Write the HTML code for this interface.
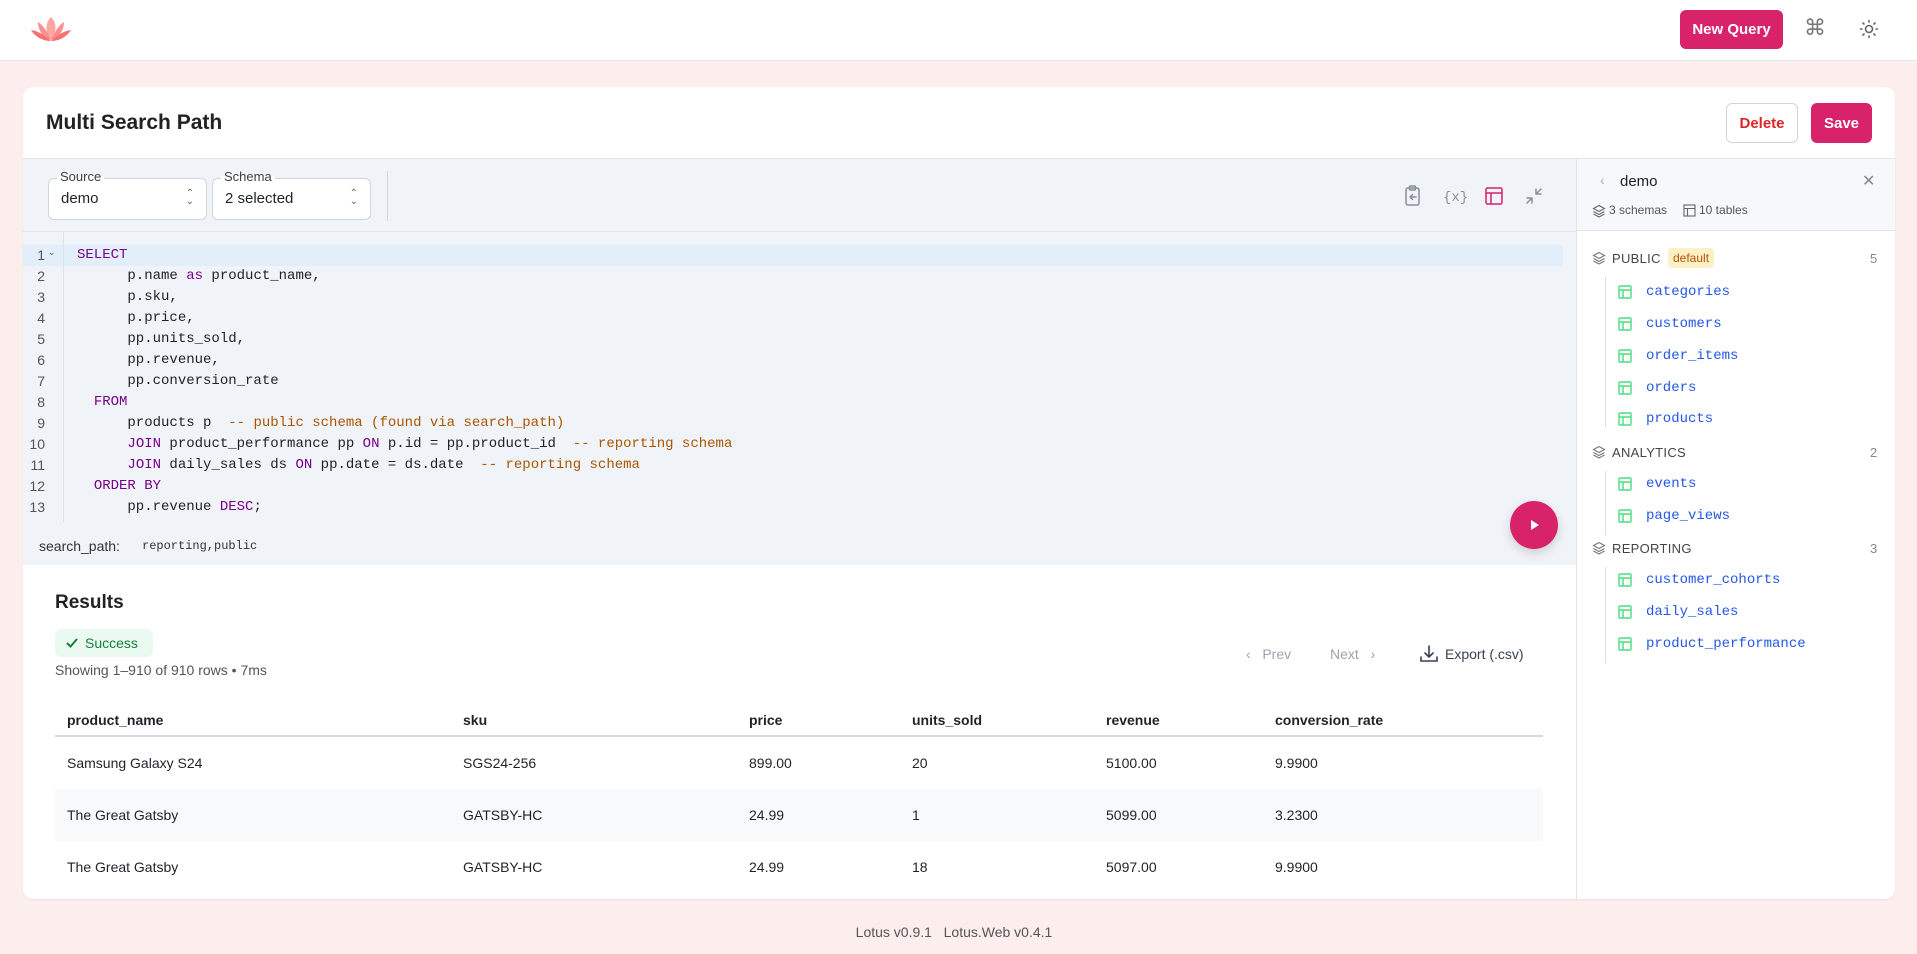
<!DOCTYPE html>
<html><head><meta charset="utf-8"><style>
*{box-sizing:border-box;margin:0;padding:0}
body{width:1917px;height:954px;background:#fdeeee;font-family:"Liberation Sans",sans-serif;color:#1f2328;position:relative;overflow:hidden}
.a{position:absolute}
.mono{font-family:"Liberation Mono",monospace}
.hdr{left:0;top:0;width:1917px;height:61px;background:#fff;border-bottom:1px solid #e3e5ea}
.btn{border-radius:6px;font-weight:bold;font-size:15px;display:flex;align-items:center;justify-content:center}
.card{left:23px;top:87px;width:1872px;height:812px;background:#fff;border-radius:10px;overflow:hidden;box-shadow:0 1px 2px rgba(0,0,0,.05)}
.sel{border:1px solid #d0d4db;border-radius:6px;background:#fff;height:42px}
.sel .lab{position:absolute;top:-10px;left:8px;background:linear-gradient(#f0f3f8 50%,#fff 50%);padding:0 3px;font-size:13px;color:#3a3f47}
.sel .v{position:absolute;left:12px;top:11px;font-size:15px}
.sel .ud{position:absolute;right:12px;top:11px;font-size:10px;color:#666;line-height:8px;text-align:center}
.code{font-size:14px;line-height:21px;white-space:pre;color:#222}
.k{color:#770088}.c{color:#aa5500}
.ln{font-size:14px;line-height:21px;color:#555;text-align:right;width:22px}
.tbl{font-size:14px}
.tn{font-size:14px;color:#2457e6;font-family:"Liberation Mono",monospace;position:absolute;left:29px;white-space:nowrap;line-height:18px}
.sch{font-size:13px;color:#444;letter-spacing:.3px}
.cnt{font-size:13px;color:#888}
</style></head><body>
<div class="a hdr"></div>
<svg class="a" style="left:30px;top:16px" width="42" height="28" viewBox="0 0 42 28">
<path d="M21 1 C15 7 15 16 21 24 C27 16 27 7 21 1Z" fill="#fca5a5"/>
<path d="M8 6 C8 14 13 22 21 24 C18 17 14 10 8 6Z" fill="#fb8f8f"/>
<path d="M34 6 C34 14 29 22 21 24 C24 17 28 10 34 6Z" fill="#fb8f8f"/>
<path d="M1 14 C5 21 13 25 21 25 C15 19 8 15 1 14Z" fill="#f87171"/>
<path d="M41 14 C37 21 29 25 21 25 C27 19 34 15 41 14Z" fill="#f87171"/>
</svg>
<div class="a btn" style="left:1680px;top:10px;width:103px;height:39px;background:#d8236b;color:#fff">New Query</div>
<div class="a" style="left:1804px;top:15px;font-size:22px;color:#777">⌘</div>
<svg class="a" style="left:1859px;top:19px" width="20" height="20" viewBox="0 0 20 20" fill="none" stroke="#666" stroke-width="1.6"><circle cx="10" cy="10" r="3.5"/><path d="M10 1.5v1.5M10 17v1.5M1.5 10H3M17 10h1.5M4 4l1 1M15 15l1 1M4 16l1-1M15 5l1-1" stroke-linecap="round"/></svg>

<div class="a card">
 <div class="a" style="left:23px;top:24px;font-size:21px;font-weight:bold;color:#222">Multi Search Path</div>
 <div class="a btn" style="left:1703px;top:16px;width:72px;height:40px;border:1px solid #d0d4db;color:#dc2626;background:#fff">Delete</div>
 <div class="a btn" style="left:1788px;top:16px;width:61px;height:40px;background:#d8236b;color:#fff">Save</div>
 <div class="a" style="left:0;top:71px;width:1872px;height:1px;background:#e3e5ea"></div>
 <div class="a" style="left:0;top:72px;width:1553px;height:406px;background:#f0f3f8"></div>
 <div class="a" style="left:0;top:144px;width:1553px;height:1px;background:#e1e4ea"></div>
 <div class="a sel" style="left:25px;top:91px;width:159px"><span class="lab">Source</span><span class="v">demo</span><span class="ud">⌃<br>⌄</span></div>
 <div class="a sel" style="left:189px;top:91px;width:159px"><span class="lab">Schema</span><span class="v">2 selected</span><span class="ud">⌃<br>⌄</span></div>
 <div class="a" style="left:364px;top:84px;width:1px;height:50px;background:#d0d4db"></div>
 <svg class="a" style="left:1380px;top:98px" width="140" height="22" viewBox="0 0 140 22" fill="none" stroke-width="1.5" stroke-linecap="round" stroke-linejoin="round">
  <g stroke="#8a8f98"><rect x="3" y="3" width="13" height="17" rx="2"/><rect x="6.5" y="1" width="6" height="4" rx="1"/><path d="M13 12H7M9.5 9.5L7 12l2.5 2.5"/></g>
  <text x="40" y="16" font-family="Liberation Mono" font-size="14" fill="#8a8f98" stroke="none">{x}</text>
  <g stroke="#d8236b"><rect x="83" y="3" width="16" height="16" rx="1.5"/><path d="M83 8h16M88 8v11"/></g>
  <g stroke="#8a8f98"><path d="M124 18l5-5M124 13h5v5M138 4l-5 5M133 4v5h5"/></g>
 </svg>
 <div class="a" style="left:0;top:158px;width:1540px;height:21px;background:#e2eef9"></div>
 <div class="a" style="left:40px;top:145px;width:1px;height:290px;background:#dde1e7"></div>
 <div class="a ln" style="left:0;top:158px">1<br>2<br>3<br>4<br>5<br>6<br>7<br>8<br>9<br>10<br>11<br>12<br>13</div>
 <div class="a" style="left:25px;top:160px;font-size:9px;color:#666">⌄</div>
 <div class="a code mono" style="left:54px;top:158px"><span class="k">SELECT</span>
      p.name <span class="k">as</span> product_name,
      p.sku,
      p.price,
      pp.units_sold,
      pp.revenue,
      pp.conversion_rate
  <span class="k">FROM</span>
      products p  <span class="c">-- public schema (found via search_path)</span>
      <span class="k">JOIN</span> product_performance pp <span class="k">ON</span> p.id = pp.product_id  <span class="c">-- reporting schema</span>
      <span class="k">JOIN</span> daily_sales ds <span class="k">ON</span> pp.date = ds.date  <span class="c">-- reporting schema</span>
  <span class="k">ORDER BY</span>
      pp.revenue <span class="k">DESC</span>;</div>
 <div class="a" style="left:16px;top:451px;font-size:14px;color:#333">search_path:</div>
 <div class="a mono" style="left:119px;top:452px;font-size:12px;color:#333">reporting,public</div>
 <div class="a" style="left:1487px;top:414px;width:48px;height:48px;border-radius:50%;background:#d8236b;box-shadow:0 4px 10px rgba(0,0,0,.15)"><svg width="48" height="48"><path d="M21 19l8 5-8 5z" fill="#fff"/></svg></div>
 <div class="a" style="left:32px;top:505px;font-size:19px;font-weight:bold;color:#222">Results</div>
 <div class="a" style="left:32px;top:542px;width:98px;height:28px;background:#eafaf0;border-radius:6px;color:#15803d;font-size:14px;padding:6px 0 0 30px">Success</div>
 <svg class="a" style="left:42px;top:549px" width="14" height="14"><path d="M2 7l3.5 3.5L12 3" fill="none" stroke="#15803d" stroke-width="2"/></svg>
 <div class="a" style="left:32px;top:575px;font-size:14px;color:#555">Showing 1–910 of 910 rows • 7ms</div>
 <div class="a" style="left:1223px;top:559px;font-size:14px;color:#9ca3af">‹&nbsp;&nbsp;&nbsp;Prev</div>
 <div class="a" style="left:1307px;top:559px;font-size:14px;color:#9ca3af">Next&nbsp;&nbsp;&nbsp;›</div>
 <svg class="a" style="left:1396px;top:557px" width="20" height="20" fill="none" stroke="#374151" stroke-width="1.6" stroke-linecap="round"><path d="M10 2v11M6 9l4 4 4-4M2 13v4h16v-4"/></svg>
 <div class="a" style="left:1422px;top:559px;font-size:14px;color:#374151">Export (.csv)</div>
 <div class="a tbl" style="left:32px;top:616px;width:1488px">
  <div style="height:34px;border-bottom:2px solid #d4d7dc;position:relative;font-weight:bold;font-size:14px">
   <span class="a" style="left:12px;top:9px">product_name</span><span class="a" style="left:408px;top:9px">sku</span><span class="a" style="left:694px;top:9px">price</span><span class="a" style="left:857px;top:9px">units_sold</span><span class="a" style="left:1051px;top:9px">revenue</span><span class="a" style="left:1220px;top:9px">conversion_rate</span>
  </div>
  <div style="height:52px;position:relative"><span class="a" style="left:12px;top:18px">Samsung Galaxy S24</span><span class="a" style="left:408px;top:18px">SGS24-256</span><span class="a" style="left:694px;top:18px">899.00</span><span class="a" style="left:857px;top:18px">20</span><span class="a" style="left:1051px;top:18px">5100.00</span><span class="a" style="left:1220px;top:18px">9.9900</span></div>
  <div style="height:52px;position:relative;background:#f8f9fa"><span class="a" style="left:12px;top:18px">The Great Gatsby</span><span class="a" style="left:408px;top:18px">GATSBY-HC</span><span class="a" style="left:694px;top:18px">24.99</span><span class="a" style="left:857px;top:18px">1</span><span class="a" style="left:1051px;top:18px">5099.00</span><span class="a" style="left:1220px;top:18px">3.2300</span></div>
  <div style="height:52px;position:relative"><span class="a" style="left:12px;top:18px">The Great Gatsby</span><span class="a" style="left:408px;top:18px">GATSBY-HC</span><span class="a" style="left:694px;top:18px">24.99</span><span class="a" style="left:857px;top:18px">18</span><span class="a" style="left:1051px;top:18px">5097.00</span><span class="a" style="left:1220px;top:18px">9.9900</span></div>
 </div>
 <!-- sidebar -->
 <div class="a" style="left:1553px;top:72px;width:1px;height:740px;background:#e3e5ea"></div>
 <div class="a" style="left:1554px;top:72px;width:318px;height:72px;background:#f7f8fa"></div>
 <div class="a" style="left:1577px;top:85px;font-size:14px;color:#aaa">‹</div>
 <div class="a" style="left:1597px;top:86px;font-size:15px;color:#222">demo</div>
 <div class="a" style="left:1839px;top:84px;font-size:16px;color:#888">✕</div>
 <svg class="a" style="left:1569px;top:117px" width="14" height="14" fill="none" stroke="#666" stroke-width="1.1"><path d="M7 1.5L1.5 4.5 7 7.5l5.5-3zM1.5 7.5L7 10.5l5.5-3M1.5 10L7 13l5.5-3"/></svg>
 <div class="a" style="left:1586px;top:116px;font-size:12px;color:#555">3 schemas</div>
 <svg class="a" style="left:1660px;top:117px" width="13" height="13" fill="none" stroke="#666" stroke-width="1.1"><rect x="1" y="1" width="11" height="11"/><path d="M1 4.5h11M4.5 4.5v7.5"/></svg>
 <div class="a" style="left:1676px;top:116px;font-size:12px;color:#555">10 tables</div>
 <div class="a" style="left:1554px;top:143px;width:318px;height:1px;background:#e3e5ea"></div>

 <svg class="a" style="left:1569px;top:164px" width="14" height="14" fill="none" stroke="#777" stroke-width="1.1"><path d="M7 1.5L1.5 4.5 7 7.5l5.5-3zM1.5 7.5L7 10.5l5.5-3M1.5 10L7 13l5.5-3"/></svg>
 <div class="a sch" style="left:1589px;top:164px">PUBLIC</div>
 <div class="a" style="left:1645px;top:161px;background:#fdf0c4;color:#b45309;font-size:12px;border-radius:4px;padding:3px 5px">default</div>
 <div class="a cnt" style="left:1847px;top:164px">5</div>
 <div class="a" style="left:1582px;top:190px;width:1px;height:150px;background:#ddd"></div>
 <div class="a sch" style="left:1589px;top:358px">ANALYTICS</div><div class="a cnt" style="left:1847px;top:358px">2</div>
 <div class="a" style="left:1582px;top:384px;width:1px;height:64px;background:#ddd"></div>
 <div class="a sch" style="left:1589px;top:454px">REPORTING</div><div class="a cnt" style="left:1847px;top:454px">3</div>
 <div class="a" style="left:1582px;top:480px;width:1px;height:96px;background:#ddd"></div>
 <svg class="a" style="left:1569px;top:358px" width="14" height="14" fill="none" stroke="#777" stroke-width="1.1"><path d="M7 1.5L1.5 4.5 7 7.5l5.5-3zM1.5 7.5L7 10.5l5.5-3M1.5 10L7 13l5.5-3"/></svg>
 <svg class="a" style="left:1569px;top:454px" width="14" height="14" fill="none" stroke="#777" stroke-width="1.1"><path d="M7 1.5L1.5 4.5 7 7.5l5.5-3zM1.5 7.5L7 10.5l5.5-3M1.5 10L7 13l5.5-3"/></svg>
</div>
<div class="a" style="left:1617px;top:283px;width:280px;height:400px">
 <div class="tn" style="top:0">categories</div>
 <div class="tn" style="top:32px">customers</div>
 <div class="tn" style="top:64px">order_items</div>
 <div class="tn" style="top:96px">orders</div>
 <div class="tn" style="top:127px">products</div>
 <div class="tn" style="top:192px">events</div>
 <div class="tn" style="top:224px">page_views</div>
 <div class="tn" style="top:288px">customer_cohorts</div>
 <div class="tn" style="top:320px">daily_sales</div>
 <div class="tn" style="top:352px">product_performance</div>
 <svg style="position:absolute;left:0;top:0" width="20" height="400" fill="none" stroke="#4ade80" stroke-width="1.4">
  <defs><g id="t"><rect x="2" y="2" width="12" height="12" rx="1"/><path d="M2 6h12M6 6v8"/></g></defs>
  <use href="#t" y="1"/><use href="#t" y="33"/><use href="#t" y="65"/><use href="#t" y="97"/><use href="#t" y="128"/><use href="#t" y="193"/><use href="#t" y="225"/><use href="#t" y="289"/><use href="#t" y="321"/><use href="#t" y="353"/>
 </svg>
</div>
<div class="a" style="left:0;top:924px;width:1908px;text-align:center;font-size:14px;color:#555">Lotus v0.9.1&nbsp;&nbsp;&nbsp;Lotus.Web v0.4.1</div>
</body></html>
